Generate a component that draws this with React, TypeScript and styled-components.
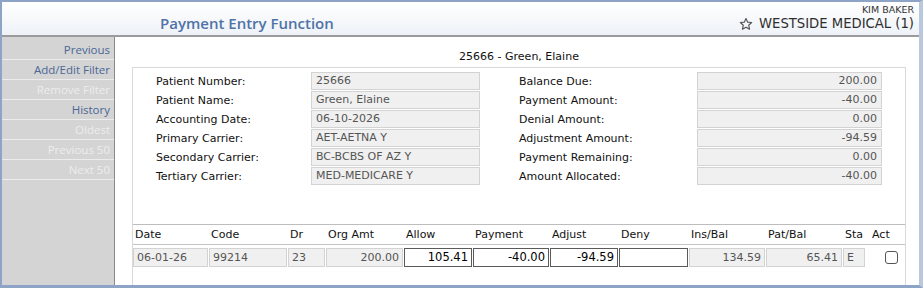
import styled, { createGlobalStyle } from "styled-components";

const GlobalStyle = createGlobalStyle`
  html, body {
    margin: 0;
    padding: 0;
    background: #ffffff;
  }
  * {
    box-sizing: border-box;
  }
`;

const Frame = styled.div`
  width: 923px;
  height: 288px;
  border-left: 2px solid #8da4c6;
  border-top: 2px solid #8da4c6;
  border-bottom: 3px solid #8da4c6;
  border-right: 4px solid #b9c8dc;
  display: flex;
  flex-direction: column;
  overflow: hidden;
  font-family: "DejaVu Sans", Verdana, sans-serif;
`;

const Header = styled.div`
  height: 35px;
  flex: none;
  display: flex;
  justify-content: space-between;
  align-items: flex-end;
  padding: 0 5px 3px 158px;
  background: linear-gradient(#ffffff, #eef2f7);
  border-bottom: 2px solid #9b9b9b;
`;

const Title = styled.div`
  font-family: "Open Sans", sans-serif;
  font-size: 15px;
  font-weight: 600;
  color: #4f73a6;
  line-height: 18px;
`;

const UserBlock = styled.div`
  display: flex;
  flex-direction: column;
  align-items: flex-end;
  color: #333333;
`;

const UserName = styled.div`
  font-size: 9.5px;
  line-height: 11px;
`;

const Practice = styled.div`
  display: flex;
  align-items: center;
  gap: 6px;
  font-size: 13.2px;
  line-height: 17px;
  color: #2e2e2e;
`;

const Body = styled.div`
  flex: 1;
  display: flex;
  min-height: 0;
`;

const Sidebar = styled.div`
  width: 113px;
  flex: none;
  background: #d4d4d4;
  border-right: 1px solid #8a8a8a;
  padding-top: 3px;
`;

const NavItem = styled.div<{ $disabled?: boolean }>`
  height: 20px;
  border-bottom: 1px solid #ececec;
  text-align: right;
  padding-right: 4px;
  font-family: "Open Sans", sans-serif;
  font-size: 11.5px;
  line-height: 19px;
  color: ${(p) => (p.$disabled ? "#ededed" : "#4a6796")};
`;

const Main = styled.div`
  flex: 1;
  display: flex;
  flex-direction: column;
  padding: 0 13px 0 17px;
`;

const PatientTitle = styled.div`
  height: 30px;
  padding-top: 12px;
  text-align: center;
  font-size: 11px;
  line-height: 16px;
  color: #111111;
`;

const Box = styled.div`
  flex: 1;
  border: 1px solid #d9d9d9;
  border-bottom: none;
  display: flex;
  flex-direction: column;
`;

const Fields = styled.div`
  display: flex;
  gap: 39px;
  padding: 4px 0 0 23px;
  height: 156px;
`;

const FieldColumn = styled.div<{ $label: number; $input: number }>`
  display: grid;
  grid-template-columns: ${(p) => p.$label}px ${(p) => p.$input}px;
  grid-auto-rows: 18px;
  row-gap: 1px;
  align-items: center;
`;

const Label = styled.div`
  font-size: 11px;
  color: #111111;
`;

const ReadOnly = styled.div<{ $right?: boolean }>`
  height: 18px;
  background: #f0f0f0;
  border: 1px solid #d3d3d3;
  font-size: 11px;
  line-height: 16px;
  color: #555555;
  padding: 0 4px;
  text-align: ${(p) => (p.$right ? "right" : "left")};
  white-space: nowrap;
  overflow: hidden;
`;

const Table = styled.div`
  border-top: 1px solid #bdbdbd;
`;

const cols = "76px 79px 38px 78px 69px 77px 69px 70px 77px 77px 23px 1fr";

const HeadRow = styled.div`
  display: grid;
  grid-template-columns: ${cols};
  height: 20px;
  border-bottom: 1px solid #c4c4c4;
  align-items: center;
`;

const HeadCell = styled.div<{ $act?: boolean }>`
  font-size: 11px;
  color: #111111;
  padding-left: ${(p) => (p.$act ? "6px" : "2px")};
`;

const DataRow = styled.div`
  display: grid;
  grid-template-columns: ${cols};
  padding-top: 3px;
  align-items: center;
`;

const Cell = styled.div<{ $right?: boolean; $edit?: boolean }>`
  height: 19px;
  margin-right: 1px;
  background: ${(p) => (p.$edit ? "#ffffff" : "#f0f0f0")};
  border: 1px solid ${(p) => (p.$edit ? "#5a5a5a" : "#d3d3d3")};
  font-size: ${(p) => (p.$edit ? "11.5px" : "11px")};
  line-height: 17px;
  color: ${(p) => (p.$edit ? "#000000" : "#555555")};
  padding: 0 3px;
  text-align: ${(p) => (p.$right ? "right" : "left")};
  white-space: nowrap;
`;

const CheckCell = styled.div`
  display: flex;
  justify-content: center;
  padding-left: 12px;
`;

const CheckBox = styled.div`
  width: 13px;
  height: 13px;
  border: 1px solid #555555;
  border-radius: 3px;
  background: #ffffff;
`;

const StarIcon = () => (
  <svg width="14" height="14" viewBox="0 0 24 24" fill="none" stroke="#555" strokeWidth="2" strokeLinejoin="round">
    <path d="M12 2.5l2.9 6.3 6.8.7-5.1 4.6 1.5 6.8L12 17.4l-6.1 3.5 1.5-6.8-5.1-4.6 6.8-.7z" />
  </svg>
);

const navItems = [
  { label: "Previous", disabled: false },
  { label: "Add/Edit Filter", disabled: false },
  { label: "Remove Filter", disabled: true },
  { label: "History", disabled: false },
  { label: "Oldest", disabled: true },
  { label: "Previous 50", disabled: true },
  { label: "Next 50", disabled: true },
];

const leftFields = [
  ["Patient Number:", "25666"],
  ["Patient Name:", "Green, Elaine"],
  ["Accounting Date:", "06-10-2026"],
  ["Primary Carrier:", "AET-AETNA Y"],
  ["Secondary Carrier:", "BC-BCBS OF AZ Y"],
  ["Tertiary Carrier:", "MED-MEDICARE Y"],
];

const rightFields = [
  ["Balance Due:", "200.00"],
  ["Payment Amount:", "-40.00"],
  ["Denial Amount:", "0.00"],
  ["Adjustment Amount:", "-94.59"],
  ["Payment Remaining:", "0.00"],
  ["Amount Allocated:", "-40.00"],
];

const headers = ["Date", "Code", "Dr", "Org Amt", "Allow", "Payment", "Adjust", "Deny", "Ins/Bal", "Pat/Bal", "Sta"];

function App() {
  return (
    <>
      <GlobalStyle />
      <Frame>
        <Header>
          <Title>Payment Entry Function</Title>
          <UserBlock>
            <UserName>KIM BAKER</UserName>
            <Practice>
              <StarIcon />
              WESTSIDE MEDICAL (1)
            </Practice>
          </UserBlock>
        </Header>
        <Body>
          <Sidebar>
            {navItems.map((item) => (
              <NavItem key={item.label} $disabled={item.disabled}>
                {item.label}
              </NavItem>
            ))}
          </Sidebar>
          <Main>
            <PatientTitle>25666 - Green, Elaine</PatientTitle>
            <Box>
              <Fields>
                <FieldColumn $label={155} $input={169}>
                  {leftFields.map(([label, value]) => [
                    <Label key={label}>{label}</Label>,
                    <ReadOnly key={label + "v"}>{value}</ReadOnly>,
                  ])}
                </FieldColumn>
                <FieldColumn $label={178} $input={185}>
                  {rightFields.map(([label, value]) => [
                    <Label key={label}>{label}</Label>,
                    <ReadOnly key={label + "v"} $right>
                      {value}
                    </ReadOnly>,
                  ])}
                </FieldColumn>
              </Fields>
              <Table>
                <HeadRow>
                  {headers.map((h) => (
                    <HeadCell key={h}>{h}</HeadCell>
                  ))}
                  <HeadCell $act>Act</HeadCell>
                </HeadRow>
                <DataRow>
                  <Cell>06-01-26</Cell>
                  <Cell>99214</Cell>
                  <Cell>23</Cell>
                  <Cell $right>200.00</Cell>
                  <Cell $right $edit>105.41</Cell>
                  <Cell $right $edit>-40.00</Cell>
                  <Cell $right $edit>-94.59</Cell>
                  <Cell $edit></Cell>
                  <Cell $right>134.59</Cell>
                  <Cell $right>65.41</Cell>
                  <Cell>E</Cell>
                  <CheckCell>
                    <CheckBox />
                  </CheckCell>
                </DataRow>
              </Table>
            </Box>
          </Main>
        </Body>
      </Frame>
    </>
  );
}

export default App;
